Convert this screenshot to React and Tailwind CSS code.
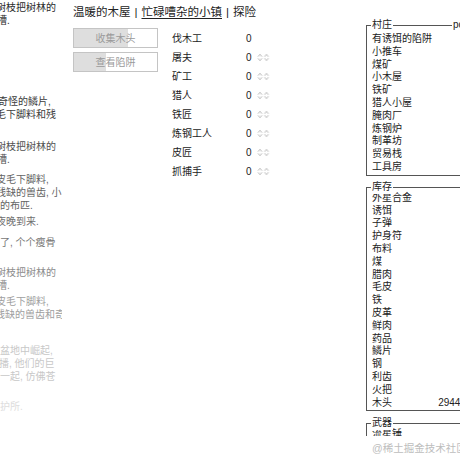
import React from 'react';

const notes = [
  { mt: 'mt-[1px]', color: 'text-[#2a2a2a]', lines: [['树枝把树林的', '-ml-[4px]'], ['槽.', '-ml-[3px]']] },
  { mt: 'mt-[68px]', color: 'text-[#3c3c3c]', lines: [['奇怪的鳞片,', '-ml-[2px]'], ['毛下脚料和残', '-ml-[4px]']] },
  { mt: 'mt-[19px]', color: 'text-[#505050]', lines: [['树枝把树林的', '-ml-[4px]'], ['槽.', '-ml-[3px]']] },
  { mt: 'mt-[7px]', color: 'text-[#636363]', lines: [['皮毛下脚料,', '-ml-[4px]'], ['残缺的兽齿, 小', '-ml-[4px]'], ['的布匹.', 'ml-0']] },
  { mt: 'mt-[3px]', color: 'text-[#707070]', lines: [['夜晚到来.', '-ml-[4px]']] },
  { mt: 'mt-[8px]', color: 'text-[#777777]', lines: [['了, 个个瘦骨', 'ml-0']] },
  { mt: 'mt-[17px]', color: 'text-[#8c8c8c]', lines: [['树枝把树林的', '-ml-[4px]'], ['槽.', '-ml-[3px]']] },
  { mt: 'mt-[3px]', color: 'text-[#a0a0a0]', lines: [['皮毛下脚料,', '-ml-[4px]'], ['残缺的兽齿和奇', '-ml-[5px]']] },
  { mt: 'mt-[23px]', color: 'text-[#c8c8c8]', lines: [['盆地中崛起,', 'ml-0'], ['播, 他们的巨', '-ml-[1px]'], ['一起, 仿佛苍', 'ml-0']] },
  { mt: 'mt-[17px]', color: 'text-[#dddddd]', lines: [['护所.', 'ml-0']] },
];

const workers = [
  { name: '伐木工', arrows: false },
  { name: '屠夫', arrows: true },
  { name: '矿工', arrows: true },
  { name: '猎人', arrows: true },
  { name: '铁匠', arrows: true },
  { name: '炼钢工人', arrows: true },
  { name: '皮匠', arrows: true },
  { name: '抓捕手', arrows: true },
];

const village = ['有诱饵的陷阱', '小推车', '煤矿', '小木屋', '铁矿', '猎人小屋', '腌肉厂', '炼钢炉', '制革坊', '贸易栈', '工具房'];

const store = [
  ['外星合金', ''], ['诱饵', ''], ['子弹', ''], ['护身符', ''], ['布料', ''], ['煤', ''],
  ['腊肉', ''], ['毛皮', ''], ['铁', ''], ['皮革', ''], ['鲜肉', ''], ['药品', ''],
  ['鳞片', ''], ['钢', ''], ['利齿', ''], ['火把', ''], ['木头', '29446'],
];

function Arrows() {
  return (
    <svg width="13" height="9" viewBox="0 0 13 9" fill="none" stroke="#c6c6c6" strokeWidth="0.8" strokeLinejoin="round">
      <path d="M0.7 3.6 L3 1 L5.3 3.6" />
      <path d="M1.8 3.6 L3 2.3 L4.2 3.6" />
      <path d="M0.7 5.4 L3 8 L5.3 5.4" />
      <path d="M1.8 5.4 L3 6.7 L4.2 5.4" />
      <path d="M7.2 3.6 L9.5 1 L11.8 3.6" />
      <path d="M8.3 3.6 L9.5 2.3 L10.7 3.6" />
      <path d="M7.2 5.4 L9.5 8 L11.8 5.4" />
      <path d="M8.3 5.4 L9.5 6.7 L10.7 5.4" />
    </svg>
  );
}

function Button({ label, fill }) {
  return (
    <div className="relative h-[20px] w-[85px] border border-[#c4c4c4] bg-white overflow-hidden">
      <div className={`h-full bg-[#dedede] ${fill}`} />
      <div className="absolute inset-0 flex items-center justify-center text-[10px] text-[#9a9a9a]">{label}</div>
    </div>
  );
}

export default function App() {
  return (
    <div className="relative w-[460px] h-[460px] overflow-hidden bg-white text-[#222] font-['Liberation_Sans','Noto_Sans_CJK_SC',sans-serif]">
      <div className="flex">
        {/* notifications */}
        <div className="w-[62px] shrink-0 overflow-hidden text-[10px] leading-[13px]">
          {notes.map((n, i) => (
            <div key={i} className={`${n.mt} ${n.color}`}>
              {n.lines.map(([t, ml], j) => (
                <div key={j} className={`whitespace-nowrap ${ml}`}>{t}</div>
              ))}
            </div>
          ))}
        </div>

        {/* main panel */}
        <div className="ml-[11px] w-[293px] shrink-0">
          <div className="flex items-center pt-[5px] text-[11.5px] leading-[14px] whitespace-nowrap">
            <span>温暖的木屋</span>
            <span className="mx-[4px]">|</span>
            <span className="underline underline-offset-2">忙碌嘈杂的小镇</span>
            <span className="mx-[4px]">|</span>
            <span>探险</span>
          </div>
          <div className="flex mt-[9px]">
            <div className="flex flex-col gap-[4px]">
              <Button label="收集木头" fill="w-[65%]" />
              <Button label="查看陷阱" fill="w-[39%]" />
            </div>
            <div className="ml-[14px] mt-[1px] text-[10px]">
              {workers.map((w) => (
                <div key={w.name} className="flex items-center h-[19px]">
                  <span className="w-[74px]">{w.name}</span>
                  <span className="w-[11px]">0</span>
                  {w.arrows && <Arrows />}
                </div>
              ))}
            </div>
          </div>
        </div>

        {/* stores */}
        <div className="w-[106px] shrink-0 pt-[25px] text-[10px] leading-[12.8px]">
          <div className="relative border border-[#555] px-[5px] pt-[7px] pb-[1px]">
            <span className="absolute -top-[8px] left-[4px] bg-white px-px leading-[14px]">村庄</span>
            <span className="absolute -top-[8px] left-[85px] bg-white px-px leading-[14px] whitespace-nowrap">pop 29</span>
            {village.map((v) => (
              <div key={v}>{v}</div>
            ))}
          </div>
          <div className="relative mt-[11px] border border-[#555] px-[5px] pt-[4px] pb-[1px]">
            <span className="absolute -top-[8px] left-[4px] bg-white px-px leading-[14px]">库存</span>
            {store.map(([k, v]) => (
              <div key={k} className="flex justify-between">
                <span>{k}</span>
                <span>{v}</span>
              </div>
            ))}
          </div>
          <div className="relative mt-[12px] border border-[#555] px-[5px] pt-[4px] pb-[1px]">
            <span className="absolute -top-[8px] left-[4px] bg-white px-px leading-[14px]">武器</span>
            <div>流星锤</div>
            <div>铁剑</div>
          </div>
        </div>
      </div>

      {/* watermark strip */}
      <div className="absolute left-0 right-0 bottom-0 h-[24px] bg-white">
        <span className="absolute left-[372px] top-[5px] text-[10.5px] text-[#bdbdbd] whitespace-nowrap">@稀土掘金技术社区</span>
      </div>
    </div>
  );
}
